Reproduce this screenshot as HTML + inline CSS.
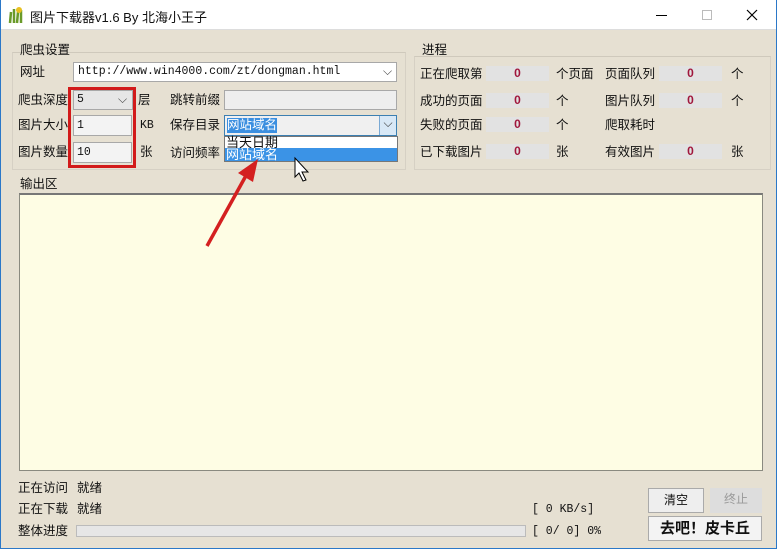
<!DOCTYPE html>
<html><head><meta charset="utf-8"><style>
*{margin:0;padding:0;box-sizing:border-box}
body{width:777px;height:549px;overflow:hidden;position:relative;background:#e6e0d2;font-family:"Liberation Sans","Noto Sans CJK SC",sans-serif;font-size:12px;color:#111}
.a{position:absolute;white-space:nowrap}
.t{position:absolute;font-size:12.5px;line-height:14px;white-space:nowrap}
.in{position:absolute;background:#f3f3f3;border:1px solid #a8a8a8}
.f{position:absolute;background:#e2e2e2;height:15px;color:#a0163c;font-weight:bold;font-size:12px;text-align:center;line-height:15px;font-family:"Liberation Sans",sans-serif}
.mono{font-family:"Liberation Mono",monospace;font-size:11.5px}
.grp{position:absolute;border:1px solid #d6d0c4;border-top-color:#cfc9bc}
</style></head><body>
<div class="a" style="left:0;top:0;width:777px;height:30px;background:#fff;border-bottom:1px solid #ddd"></div>
<div class="a" style="left:0;top:0;width:1px;height:549px;background:#2b78c8"></div>
<div class="a" style="left:776px;top:0;width:1px;height:549px;background:#2b78c8"></div>
<div class="a" style="left:0;top:548px;width:777px;height:1px;background:#2b78c8"></div>
<svg class="a" style="left:8px;top:6px" width="16" height="18"><path d="M2 17 L3 6 M6 17 L6 3 M9 17 L10 6 M13 17 L13 4" stroke="#6a9a2a" stroke-width="2.5"/><circle cx="11" cy="4" r="3" fill="#e8c020"/></svg>
<div class="a" style="left:30px;top:7px;font-size:13px">图片下载器v1.6 By 北海小王子</div>
<div class="a" style="left:656px;top:15px;width:11px;height:1px;background:#000"></div>
<div class="a" style="left:702px;top:10px;width:10px;height:10px;border:1px solid #bbb"></div>
<svg class="a" style="left:746px;top:9px" width="12" height="12"><path d="M1 1L11 11M11 1L1 11" stroke="#000" stroke-width="1.2"/></svg>

<div class="grp" style="left:12px;top:52px;width:394px;height:118px"></div>
<div class="t" style="left:20px;top:43px">爬虫设置</div>
<div class="t" style="left:20px;top:65px">网址</div>
<div class="in mono" style="left:73px;top:62px;width:324px;height:20px;background:#fff;padding:2px 4px">http://www.win4000.com/zt/dongman.html</div>
<div class="a" style="left:383px;top:64px;color:#444">⌵</div>
<div class="t" style="left:18px;top:93px">爬虫深度</div>
<div class="in mono" style="left:73px;top:90px;width:60px;height:20px;background:#e6e6e6;padding:2px 3px">5</div>
<div class="a" style="left:118px;top:92px;color:#444">⌵</div>
<div class="t" style="left:138px;top:93px">层</div>
<div class="t" style="left:170px;top:93px">跳转前缀</div>
<div class="in" style="left:224px;top:90px;width:173px;height:20px;background:#eee"></div>
<div class="t" style="left:18px;top:118px">图片大小</div>
<div class="in mono" style="left:73px;top:115px;width:59px;height:21px;padding:3px 3px">1</div>
<div class="t mono" style="left:140px;top:119px">KB</div>
<div class="t" style="left:170px;top:118px">保存目录</div>
<div class="in" style="left:224px;top:115px;width:173px;height:21px;background:#f0f0f0;border-color:#3c7fb1"></div>
<div class="a" style="left:227px;top:118px;background:#3b8fe0;color:#fff;font-size:12.5px;line-height:15px">网站域名</div>
<div class="a" style="left:379px;top:116px;width:17px;height:19px;background:#d8e8f6;border-left:1px solid #7aa9d4;text-align:center;color:#333">⌵</div>
<div class="t" style="left:18px;top:145px">图片数量</div>
<div class="in mono" style="left:73px;top:142px;width:59px;height:21px;padding:3px 3px">10</div>
<div class="t" style="left:140px;top:145px">张</div>
<div class="t" style="left:170px;top:146px">访问频率</div>
<div class="a" style="left:224px;top:136px;width:174px;height:26px;background:#fff;border:1px solid #777"></div>
<div class="t" style="left:226px;top:136px;font-size:13px">当天日期</div>
<div class="a" style="left:225px;top:148px;width:172px;height:13px;background:#3b93e6"></div>
<div class="t" style="left:226px;top:148px;color:#fff;font-size:13px">网站域名</div>
<div class="a" style="left:68px;top:87px;width:68px;height:81px;border:3px solid #d21a1a"></div>

<div class="grp" style="left:414px;top:56px;width:357px;height:114px"></div>
<div class="t" style="left:422px;top:43px">进程</div>
<div class="t" style="left:420px;top:67px">正在爬取第</div><div class="f" style="left:486px;top:66px;width:63px">0</div><div class="t" style="left:556px;top:67px">个页面</div>
<div class="t" style="left:605px;top:67px">页面队列</div><div class="f" style="left:659px;top:66px;width:63px">0</div><div class="t" style="left:731px;top:67px">个</div>
<div class="t" style="left:420px;top:94px">成功的页面</div><div class="f" style="left:486px;top:93px;width:63px">0</div><div class="t" style="left:556px;top:94px">个</div>
<div class="t" style="left:605px;top:94px">图片队列</div><div class="f" style="left:659px;top:93px;width:63px">0</div><div class="t" style="left:731px;top:94px">个</div>
<div class="t" style="left:420px;top:118px">失败的页面</div><div class="f" style="left:486px;top:117px;width:63px">0</div><div class="t" style="left:556px;top:118px">个</div>
<div class="t" style="left:605px;top:118px">爬取耗时</div>
<div class="t" style="left:420px;top:145px">已下载图片</div><div class="f" style="left:486px;top:144px;width:63px">0</div><div class="t" style="left:556px;top:145px">张</div>
<div class="t" style="left:605px;top:145px">有效图片</div><div class="f" style="left:659px;top:144px;width:63px">0</div><div class="t" style="left:731px;top:145px">张</div>

<div class="t" style="left:20px;top:177px">输出区</div>
<div class="a" style="left:19px;top:193px;width:744px;height:278px;background:#fefde4;border:1px solid #8a8a80;border-top:2px solid #777"></div>

<svg class="a" style="left:200px;top:150px;z-index:5" width="110" height="110"><path d="M7 96 L48 22" stroke="#d42020" stroke-width="3.5"/><path d="M58 9 L38 23 L53 32Z" fill="#d42020"/><path d="M95 8 L95 27 L99 23 L103 31 L106 30 L102 22 L108 22Z" fill="#fff" stroke="#000"/></svg>

<div class="t" style="left:18px;top:481px">正在访问</div><div class="t" style="left:77px;top:481px">就绪</div>
<div class="t" style="left:18px;top:502px">正在下载</div><div class="t" style="left:77px;top:502px">就绪</div>
<div class="t" style="left:18px;top:524px">整体进度</div>
<div class="a" style="left:76px;top:525px;width:450px;height:12px;background:#e6e6e6;border:1px solid #bbb"></div>
<div class="t mono" style="left:532px;top:503px">[   0 KB/s]</div>
<div class="t mono" style="left:532px;top:525px">[ 0/ 0]  0%</div>
<div class="a" style="left:648px;top:488px;width:56px;height:25px;background:#eee;border:1px solid #aaa;text-align:center;line-height:23px">清空</div>
<div class="a" style="left:710px;top:488px;width:52px;height:25px;background:#ddd;color:#999;text-align:center;line-height:23px">终止</div>
<div class="a" style="left:648px;top:516px;width:114px;height:25px;background:#f3f3f3;border:1px solid #aaa;text-align:center;line-height:23px;font-weight:bold;font-size:15px">去吧！皮卡丘</div>
</body></html>
